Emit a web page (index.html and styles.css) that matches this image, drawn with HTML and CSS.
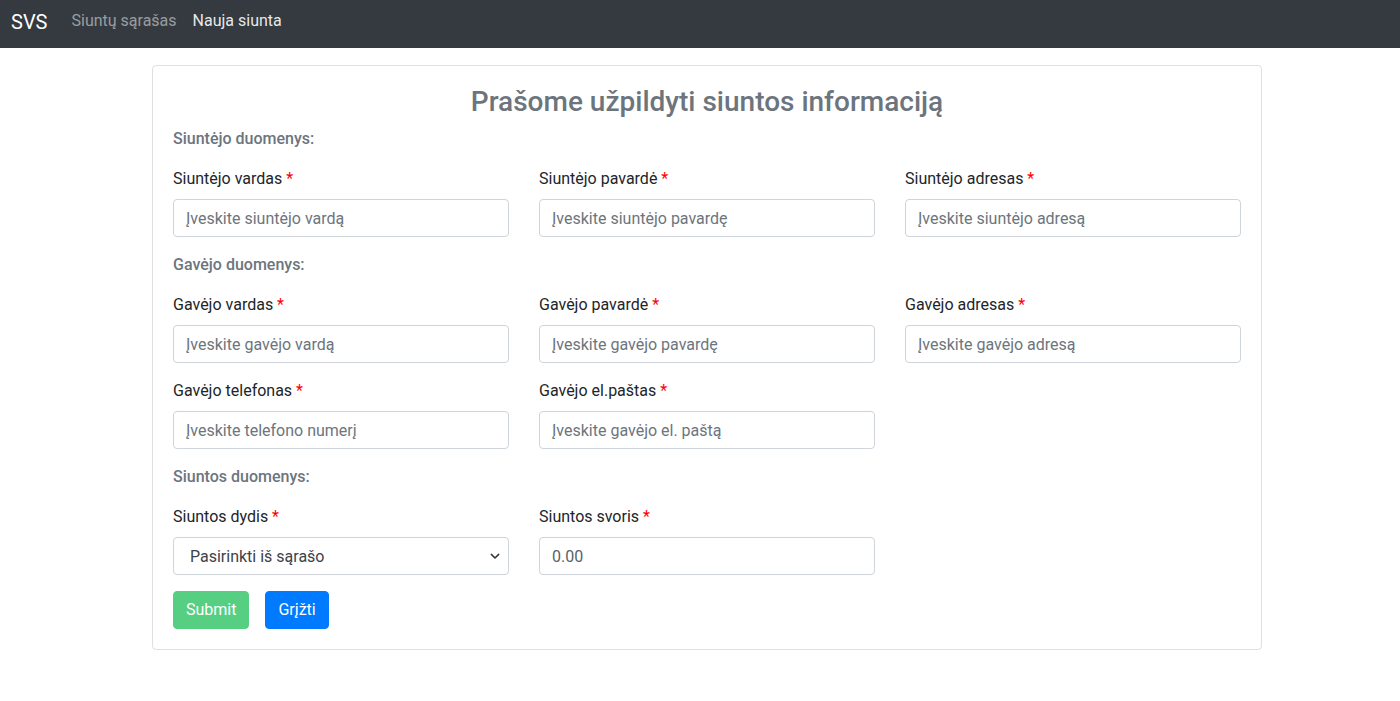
FILE: index.html
```html
<!DOCTYPE html>
<html lang="lt">
<head>
<meta charset="utf-8">
<title>SVS</title>
<link rel="stylesheet" href="styles.css">
</head>
<body>
<nav class="navbar">
  <span class="brand">SVS</span>
  <a class="nav-link">Siuntų sąrašas</a>
  <a class="nav-link active">Nauja siunta</a>
</nav>
<main class="container">
  <div class="card">
    <h3 class="title">Prašome užpildyti siuntos informaciją</h3>
    <div class="section">Siuntėjo duomenys:</div>
    <div class="row">
      <div class="group"><label>Siuntėjo vardas <span class="req">*</span></label><input class="control" placeholder="Įveskite siuntėjo vardą"></div>
      <div class="group"><label>Siuntėjo pavardė <span class="req">*</span></label><input class="control" placeholder="Įveskite siuntėjo pavardę"></div>
      <div class="group"><label>Siuntėjo adresas <span class="req">*</span></label><input class="control" placeholder="Įveskite siuntėjo adresą"></div>
    </div>
    <div class="section">Gavėjo duomenys:</div>
    <div class="row">
      <div class="group"><label>Gavėjo vardas <span class="req">*</span></label><input class="control" placeholder="Įveskite gavėjo vardą"></div>
      <div class="group"><label>Gavėjo pavardė <span class="req">*</span></label><input class="control" placeholder="Įveskite gavėjo pavardę"></div>
      <div class="group"><label>Gavėjo adresas <span class="req">*</span></label><input class="control" placeholder="Įveskite gavėjo adresą"></div>
      <div class="group"><label>Gavėjo telefonas <span class="req">*</span></label><input class="control" placeholder="Įveskite telefono numerį"></div>
      <div class="group"><label>Gavėjo el.paštas <span class="req">*</span></label><input class="control" placeholder="Įveskite gavėjo el. paštą"></div>
    </div>
    <div class="section">Siuntos duomenys:</div>
    <div class="row">
      <div class="group"><label>Siuntos dydis <span class="req">*</span></label>
        <div class="select-wrap">
          <select class="control select"><option>Pasirinkti iš sąrašo</option></select>
          <svg class="chev" width="10" height="7" viewBox="0 0 10 7"><path d="M1.3 1.4 L5 5 L8.7 1.4" fill="none" stroke="#333" stroke-width="1.5" stroke-linecap="round" stroke-linejoin="round"/></svg>
        </div>
      </div>
      <div class="group"><label>Siuntos svoris <span class="req">*</span></label><input class="control value" value="0.00"></div>
    </div>
    <div class="buttons">
      <button class="btn btn-success">Submit</button>
      <button class="btn btn-primary">Grįžti</button>
    </div>
  </div>
</main>
</body>
</html>
```
FILE: styles.css
```css
* { box-sizing: border-box; }
html, body { margin: 0; padding: 0; }
body {
  font-family: Roboto, "Liberation Sans", sans-serif;
  font-size: 16px;
  line-height: 1.5;
  color: #212529;
  background: #fff;
}
.navbar {
  height: 48px;
  background: #343a40;
  display: flex;
  align-items: center;
  padding: 0 11px;
}
.brand {
  color: #fff;
  font-size: 20px;
  margin-right: 24px;
  line-height: 1;
  margin-top: -4px;
}
.nav-link {
  color: rgba(255,255,255,.5);
  font-size: 16px;
  margin-right: 16px;
  margin-top: -6px;
}
.nav-link.active { color: rgba(255,255,255,.9); }
.container {
  width: 1110px;
  margin: 17px 0 0 152px;
}
.card {
  border: 1px solid rgba(0,0,0,.125);
  border-radius: 4px;
  padding: 19px 20px 20px;
}
.title {
  margin: 0 0 8px;
  text-align: center;
  font-size: 28px;
  line-height: 1.2;
  font-weight: 500;
  color: #6c757d;
}
.section {
  font-weight: 500;
  color: #6c757d;
  margin-bottom: 16px;
  font-size: 16px;
}
.row {
  display: grid;
  grid-template-columns: repeat(3, 1fr);
  column-gap: 30px;
}
.group { margin-bottom: 16px; }
label {
  display: block;
  margin-bottom: 8px;
}
.req { color: #ff0000; }
.control {
  display: block;
  width: 100%;
  height: 38px;
  padding: 7px 12px 5px;
  font-family: inherit;
  font-size: 16px;
  line-height: 1.5;
  color: #495057;
  background: #fff;
  border: 1px solid #ced4da;
  border-radius: 4px;
}
.control::placeholder { color: #6c757d; opacity: 1; }
.value { color: #5a6268; }
.select-wrap { position: relative; }
.select {
  appearance: none;
  -webkit-appearance: none;
  padding-left: 16px;
  color: #3d4349;
}
.chev {
  position: absolute;
  right: 9px;
  top: 16px;
  pointer-events: none;
}
.buttons {
  display: flex;
  gap: 16px;
}
.btn {
  height: 38px;
  padding: 6px 12px;
  font-family: inherit;
  font-size: 16px;
  line-height: 1.5;
  color: #fff;
  border: 1px solid transparent;
  border-radius: 4px;
}
.btn-success { background: #56cf83; border-color: #56cf83; }
.btn-primary { background: #007bff; border-color: #007bff; }
```
